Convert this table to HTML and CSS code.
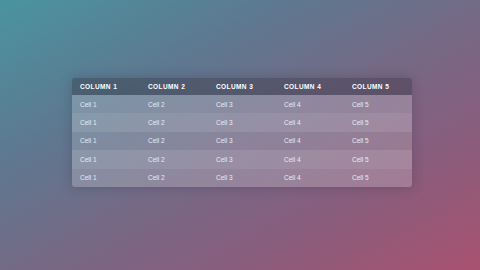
FILE: index.html
```html
<!DOCTYPE html>
<html>
<head>
<meta charset="utf-8">
<link rel="stylesheet" href="styles.css">
</head>
<body>
<main class="stage">
  <table class="grid">
    <thead>
      <tr><th>Column 1</th><th>Column 2</th><th>Column 3</th><th>Column 4</th><th>Column 5</th></tr>
    </thead>
    <tbody>
      <tr><td>Cell 1</td><td>Cell 2</td><td>Cell 3</td><td>Cell 4</td><td>Cell 5</td></tr>
      <tr><td>Cell 1</td><td>Cell 2</td><td>Cell 3</td><td>Cell 4</td><td>Cell 5</td></tr>
      <tr><td>Cell 1</td><td>Cell 2</td><td>Cell 3</td><td>Cell 4</td><td>Cell 5</td></tr>
      <tr><td>Cell 1</td><td>Cell 2</td><td>Cell 3</td><td>Cell 4</td><td>Cell 5</td></tr>
      <tr><td>Cell 1</td><td>Cell 2</td><td>Cell 3</td><td>Cell 4</td><td>Cell 5</td></tr>
    </tbody>
  </table>
</main>
</body>
</html>
```
FILE: styles.css
```css
html, body {
  margin: 0;
  padding: 0;
  width: 480px;
  height: 270px;
  overflow: hidden;
}
body {
  background: linear-gradient(to bottom right, #4a949f 0%, #5e7890 30%, #756a86 52%, #8a5c7c 75%, #a8526f 100%);
  font-family: "Liberation Sans", Arial, sans-serif;
}
.stage {
  display: flex;
  justify-content: center;
  padding: 78px 0 0 4px;
}
.grid {
  width: 340px;
  border-collapse: collapse;
  table-layout: fixed;
  border-radius: 3px;
  overflow: hidden;
  box-shadow: 0 0 12px rgba(40, 30, 60, 0.25);
  color: #f2f2f6;
}
.grid th {
  background: rgba(45, 45, 55, 0.36);
  height: 17px;
  padding: 0 0 0 8px;
  text-align: left;
  font-size: 6.5px;
  font-weight: bold;
  text-transform: uppercase;
  letter-spacing: 0.4px;
  color: #ffffff;
}
.grid td {
  height: 18.4px;
  padding: 0 0 0 8px;
  font-size: 6.5px;
  color: #eceaf2;
}
.grid tbody tr {
  background: rgba(255, 255, 255, 0.2);
}
.grid tbody tr:nth-child(even) {
  background: rgba(255, 255, 255, 0.25);
}
.grid tbody tr:nth-child(3) {
  background: rgba(255, 255, 255, 0.17);
}
```
